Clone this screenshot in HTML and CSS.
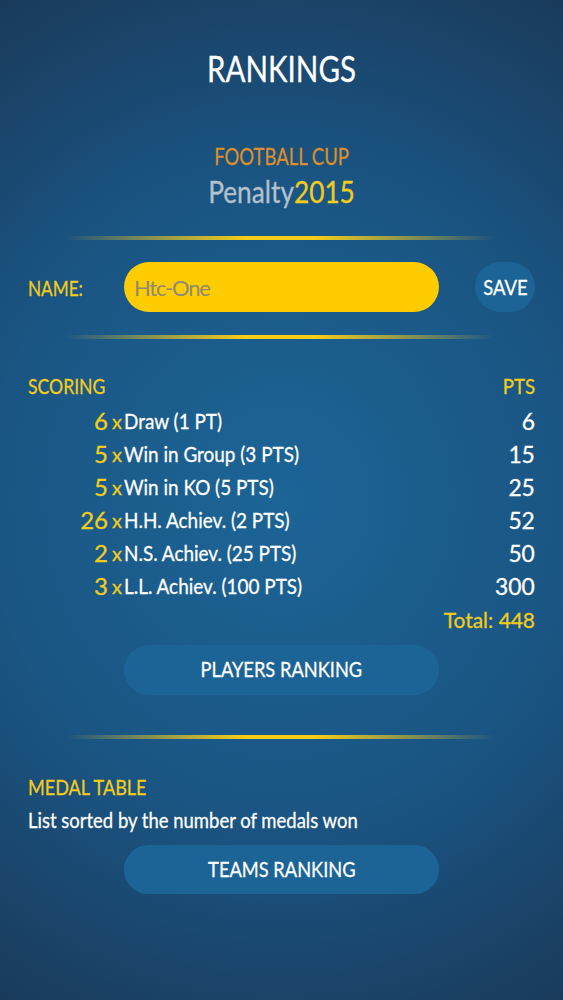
FILE: index.html
```html
<!DOCTYPE html>
<html lang="en">
<head>
<meta charset="UTF-8">
<meta name="viewport" content="width=device-width, initial-scale=1.0">
<title>Rankings</title>
<link rel="stylesheet" href="styles.css">
</head>
<body>

<div class="container">
    <h1 class="title">RANKINGS</h1>
    <div class="brand-top">FOOTBALL CUP</div>
    <div class="brand"><span class="brand-name">Penalty</span><span class="brand-year">2015</span></div>
    <div class="divider first"></div>

    <div class="name-row">
        <label class="name-label" for="playerName">NAME:</label>
        <input class="name-input" id="playerName" type="text" placeholder="Htc-One">
        <button class="save-btn"><span class="btn-text">SAVE</span></button>
    </div>
    <div class="divider second"></div>

    <div class="score-head">
        <span class="head-left">SCORING</span>
        <span class="head-right">PTS</span>
    </div>
    <div class="score-row"><span class="count">6</span><span class="times">x</span><span class="rule">Draw (1 PT)</span><span class="pts">6</span></div>
    <div class="score-row"><span class="count">5</span><span class="times">x</span><span class="rule">Win in Group (3 PTS)</span><span class="pts">15</span></div>
    <div class="score-row"><span class="count">5</span><span class="times">x</span><span class="rule">Win in KO (5 PTS)</span><span class="pts">25</span></div>
    <div class="score-row"><span class="count">26</span><span class="times">x</span><span class="rule">H.H. Achiev. (2 PTS)</span><span class="pts">52</span></div>
    <div class="score-row"><span class="count">2</span><span class="times">x</span><span class="rule">N.S. Achiev. (25 PTS)</span><span class="pts">50</span></div>
    <div class="score-row"><span class="count">3</span><span class="times">x</span><span class="rule">L.L. Achiev. (100 PTS)</span><span class="pts">300</span></div>
    <div class="total">Total: 448</div>
    <button class="rank-btn players"><span class="btn-text">PLAYERS RANKING</span></button>
    <div class="divider third"></div>

    <div class="medal-title">MEDAL TABLE</div>
    <div class="medal-text">List sorted by the number of medals won</div>
    <button class="rank-btn teams"><span class="btn-text">TEAMS RANKING</span></button>
</div>

</body>
</html>
```

FILE: styles.css
```css
html, body {
    margin: 0;
    height: 100%;
}
body {
    font-family: Lato, "Liberation Sans", sans-serif;
    color: #fff;
    -webkit-text-stroke: 0.3px;
    background: radial-gradient(ellipse 95% 58% at 50% 50%, #1c6597 0%, #1a5583 55%, #1a3b5c 100%);
}
.container {
    height: 1000px;
    box-sizing: border-box;
    padding: 47px 28px 0;
    overflow: hidden;
}
.title {
    margin: 0;
    height: 42px;
    line-height: 42px;
    font-size: 36px;
    font-weight: 400;
    text-align: center;
    transform: scaleX(0.82);
}
.brand-top {
    margin-top: 55px;
    height: 24px;
    line-height: 24px;
    font-size: 24px;
    color: #dc8f2c;
    text-align: center;
    transform: scaleX(0.77);
}
.brand {
    margin-top: 5px;
    height: 36px;
    line-height: 36px;
    font-size: 30px;
    text-align: center;
    transform: scaleX(0.875);
}
.brand-name {
    color: #b4c0cc;
}
.brand-year {
    color: #f2cc1a;
}
.divider {
    height: 4px;
    margin: 0 40px 0 37px;
    background: linear-gradient(90deg, rgba(245, 205, 25, 0), rgba(245, 205, 25, 0.55) 22%, #f5cd19 42%, #f5cd19 58%, rgba(245, 205, 25, 0.55) 78%, rgba(245, 205, 25, 0));
}
.divider.first {
    margin-top: 27px;
}
.divider.second {
    margin-top: 23px;
}
.divider.third {
    margin-top: 40px;
}
.name-row {
    display: flex;
    align-items: center;
    margin-top: 22px;
}
.name-label {
    width: 96px;
    font-size: 22px;
    color: #f2cc1a;
    transform: scaleX(0.78);
    transform-origin: left;
}
.name-input {
    width: 315px;
    height: 50px;
    box-sizing: border-box;
    padding: 0 10px;
    border: 0;
    border-radius: 25px;
    background: #ffcc00;
    font-family: inherit;
    font-size: 22px;
    letter-spacing: -1.2px;
    -webkit-text-stroke: 0;
}
.name-input::placeholder {
    color: #8f8a70;
    opacity: 1;
}
.save-btn {
    width: 60px;
    height: 50px;
    margin-left: 36px;
    padding: 0 0 2px;
    border: 0;
    border-radius: 25px;
    background: #1c6496;
    color: #fff;
    font-family: inherit;
    font-size: 22px;
}
.btn-text {
    display: inline-block;
    transform: scaleX(0.84);
}
.score-head {
    display: flex;
    justify-content: space-between;
    margin-top: 35px;
    height: 26px;
    line-height: 24px;
    font-size: 22px;
    color: #f2cc1a;
}
.head-left {
    transform: scaleX(0.8);
    transform-origin: left;
}
.head-right {
    transform: scaleX(0.85);
    transform-origin: right;
}
.score-row {
    display: flex;
    align-items: center;
    margin-top: 9px;
    height: 24px;
    line-height: 24px;
    font-size: 22px;
}
.count {
    width: 80px;
    margin-right: 4px;
    color: #f2cc1a;
    font-size: 24px;
    text-align: right;
}
.times {
    width: 12px;
    color: #f2cc1a;
    font-size: 20px;
}
.rule {
    flex: 1;
    transform: scaleX(0.86);
    transform-origin: left;
}
.pts {
    text-align: right;
    font-size: 24px;
    transform: scaleX(0.95);
    transform-origin: right;
}
.total {
    margin-top: 10px;
    height: 24px;
    line-height: 24px;
    font-size: 22px;
    color: #f2cc1a;
    text-align: right;
    transform: scaleX(0.95);
    transform-origin: right;
}
.rank-btn {
    display: block;
    width: 315px;
    height: 50px;
    margin: 0 auto;
    padding: 0 0 3px;
    border: 0;
    border-radius: 25px;
    background: #1c6496;
    color: #fff;
    font-family: inherit;
    font-size: 22px;
}
.rank-btn .btn-text {
    transform: scaleX(0.83);
}
.rank-btn.players {
    margin-top: 13px;
}
.medal-title {
    margin-top: 36px;
    height: 24px;
    line-height: 24px;
    font-size: 22px;
    color: #f2cc1a;
    transform: scaleX(0.82);
    transform-origin: left;
}
.medal-text {
    margin-top: 9px;
    height: 24px;
    line-height: 24px;
    font-size: 22px;
    transform: scaleX(0.84);
    transform-origin: left;
}
.rank-btn.teams {
    margin-top: 13px;
    height: 49px;
}
```
